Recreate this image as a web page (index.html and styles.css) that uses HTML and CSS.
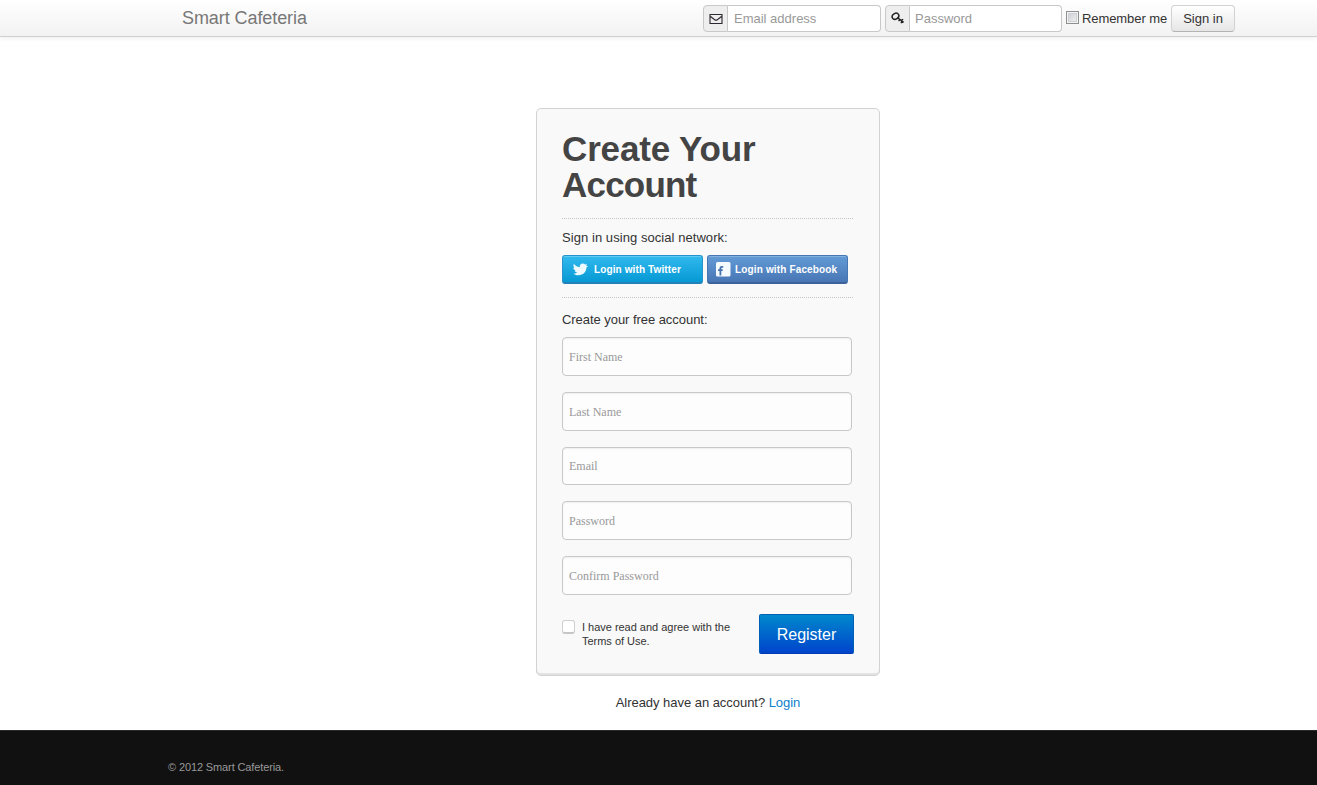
FILE: index.html
```html
<!DOCTYPE html>
<html lang="en">
<head>
<meta charset="utf-8">
<title>Smart Cafeteria</title>
<link rel="stylesheet" href="styles.css">
</head>
<body>
<header class="navbar">
  <a class="brand">Smart Cafeteria</a>
  <form class="signin">
    <div class="group">
      <span class="addon"><svg width="14" height="12" viewBox="0 0 14 12"><path d="M1 1.500h12v9H1zM1.500 3.500l4.200 3.300q1.300 1 2.600 0L12.500 3.500" fill="none" stroke="#2b2630" stroke-width="1.100"/></svg></span>
      <input class="nav-input nav-email" type="text" placeholder="Email address">
    </div>
    <div class="group">
      <span class="addon"><svg width="14" height="13" viewBox="0 0 14 13"><ellipse cx="4.500" cy="4.200" rx="3.500" ry="2.800" transform="rotate(-32 4.500 4.200)" fill="none" stroke="#222" stroke-width="1.500"/><path d="M6.400 5.600l6.200 4.800M9 7.500L7.600 9.100M11 9l-.9 2.200M10.300 8.200l1.900-.8" fill="none" stroke="#222" stroke-width="1.400"/></svg></span>
      <input class="nav-input nav-pass" type="text" placeholder="Password">
    </div>
    <span class="native-check"></span>
    <label class="remember">Remember me</label>
    <button class="btn-signin" type="button">Sign in</button>
  </form>
</header>
<main class="page">
  <section class="card">
    <h1 class="title"><span class="title-first">Create Your</span><span class="title-second">Account</span></h1>
    <div class="social">
      <p class="lead lead-social">Sign in using social network:</p>
      <div class="social-buttons">
        <a class="social-btn twitter"><svg width="16" height="13" viewBox="0 0 16 13"><path d="M.8.8C2.500 3 4.500 4 6.800 4.200C6.500 1.800 8 .5 9.900.6c1 0 1.700.4 2.300 1L14.100 1.200c-.1.700-.5 1.100-1 1.500L15 3.200 13.400 4.500c.1 4.300-3.400 7.700-7.800 7.700C3.300 12.200 1.500 11.600.3 10.700c1.700.1 3-.3 4-1.100C2.900 9.400 2.100 8.700 1.700 7.800h1.200C1.500 7 .4 6 .2 4.700l1.300.2C.5 3.800.3 2.200.8.8z" fill="#effaff"/></svg><span class="tw-label">Login with Twitter</span></a>
        <a class="social-btn facebook"><svg width="15" height="15" viewBox="0 0 15 15"><rect width="14.500" height="14.500" rx="1.500" fill="#f5faff"/><path d="M7.200 4.800H5.900c-1 0-1.500.6-1.500 1.500V13.500M2.100 8.200h4.600" fill="none" stroke="#4571ad" stroke-width="1.800"/></svg><span class="fb-label">Login with Facebook</span></a>
      </div>
    </div>
    <p class="lead lead-create">Create your free account:</p>
    <form class="fields">
      <input class="field" type="text" placeholder="First Name">
      <input class="field" type="text" placeholder="Last Name">
      <input class="field" type="text" placeholder="Email">
      <input class="field" type="text" placeholder="Password">
      <input class="field" type="text" placeholder="Confirm Password">
    </form>
    <div class="actions">
      <span class="check"></span>
      <p class="terms">I have read and agree with the<br>Terms of Use.</p>
      <button class="btn-register" type="button">Register</button>
    </div>
  </section>
  <p class="already">Already have an account? <a class="link">Login</a></p>
</main>
<footer class="footer"><p class="copyright">© 2012 Smart Cafeteria.</p></footer>
</body>
</html>
```
FILE: styles.css
```css
* { box-sizing: border-box; }
body {
  margin: 0;
  height: 785px;
  display: flex;
  flex-direction: column;
  overflow: hidden;
  background: #fff;
  color: #333;
  font: 13px/18px "Liberation Sans", Arial, sans-serif;
}
h1, p { margin: 0; }
input, button { font-family: inherit; margin: 0; }
svg { display: block; flex: none; }
input::placeholder { color: #999; opacity: 1; }

.navbar {
  display: flex;
  justify-content: space-between;
  height: 37px;
  flex: none;
  padding: 0 82px 0 182px;
  background: linear-gradient(#fff, #f2f2f2);
  border-bottom: 1px solid #d0d0d0;
  box-shadow: 0 1px 5px rgba(0, 0, 0, .08);
}
.brand { font-size: 18px; line-height: 36px; color: #777; letter-spacing: -.08px; }
.signin { display: flex; padding-top: 5px; }
.group { display: flex; height: 27px; margin-right: 4px; }
.addon {
  width: 25px;
  display: flex;
  align-items: center;
  justify-content: center;
  background: #eee;
  border: 1px solid #c8c8c8;
  border-radius: 4px 0 0 4px;
}
.nav-input {
  width: 153px;
  height: 27px;
  padding: 0 5px;
  border: 1px solid #c8c8c8;
  border-left: 0;
  border-radius: 0 4px 4px 0;
  background: #fff;
  font-size: 13px;
}
.nav-email { padding-left: 6px; }
.nav-pass { width: 152px; }
.native-check {
  width: 13px;
  height: 13px;
  margin: 6px 3px 0 0;
  border: 1px solid #8e8f8f;
  background: linear-gradient(135deg, #c5c9ce, #f6f6f6);
  box-shadow: inset 0 0 0 1px #f4f4f4, inset 0 0 0 2px #cdd0d4;
}
.remember { width: 89px; line-height: 27px; letter-spacing: -.08px; white-space: nowrap; }
.btn-signin {
  width: 64px;
  height: 27px;
  padding: 0;
  border: 1px solid #d2d2d2;
  border-bottom-color: #b3b3b3;
  border-radius: 4px;
  background: linear-gradient(#fff, #e6e6e6);
  color: #333;
  font-size: 13px;
}

.page { flex: 1; padding: 71px 0 0 536px; }
.card {
  width: 344px;
  height: 568px;
  padding: 22px 25px 0;
  background: #f9f9f9;
  border: 1px solid #d2d2d2;
  border-radius: 5px;
  box-shadow: inset 0 -2px 0 #e3e3e3;
}
.title { height: 87px; font-size: 35px; line-height: 36px; color: #444; }
.title span { display: block; }
.title-first { letter-spacing: -.15px; }
.title-second { letter-spacing: -.8px; }
.social {
  width: 291px;
  height: 80px;
  border: dotted #c4c4c4;
  border-width: 1px 0;
}
.lead-social { padding-top: 10px; letter-spacing: .06px; }
.social-buttons { display: flex; gap: 4px; margin-top: 8px; }
.social-btn {
  display: flex;
  align-items: center;
  width: 141px;
  height: 29px;
  border-radius: 3px;
  color: #fff;
  font-size: 10px;
  font-weight: bold;
  white-space: nowrap;
}
.social-btn span { padding-top: 2px; }
.twitter {
  padding-left: 10px;
  gap: 5px;
  background: linear-gradient(#31b9ee, #0699d4);
  border: 1px solid #2693cb;
  border-bottom: 2px solid #2480b8;
  box-shadow: inset 0 1px 0 #62cbf3;
  letter-spacing: .12px;
}
.facebook {
  padding-left: 8px;
  gap: 4px;
  background: linear-gradient(#629bd6, #4976b5);
  border: 1px solid #4676b5;
  border-bottom: 2px solid #3d619b;
  box-shadow: inset 0 1px 0 #83b1df;
  letter-spacing: .15px;
}
.lead-create { padding-top: 13px; letter-spacing: -.05px; }
.fields { display: flex; flex-direction: column; gap: 16px; margin-top: 8px; }
.field {
  width: 290px;
  height: 38.75px;
  padding: 2px 6px 0;
  border: 1px solid #c8c8c8;
  border-radius: 4px;
  background: #fdfdfd;
  box-shadow: inset 0 1px 2px rgba(0, 0, 0, .06);
  font: 12px "Liberation Serif", "Times New Roman", serif;
}
.actions { display: flex; width: 292px; margin-top: 19.25px; }
.check {
  width: 13px;
  height: 14px;
  margin-top: 6px;
  border: 1px solid #d0d0d0;
  border-bottom: 2px solid #c6c6c6;
  border-radius: 3px;
  background: #fff;
}
.terms { flex: 1; padding: 6px 0 0 7px; font-size: 11px; line-height: 14px; letter-spacing: -.02px; white-space: nowrap; }
.btn-register {
  width: 95px;
  height: 40px;
  padding: 2px 0 0;
  border: 1px solid #0060b5;
  border-bottom-color: #003ab3;
  border-radius: 2px;
  background: linear-gradient(#0088cc, #0044cc);
  color: #fff;
  font-size: 16px;
}
.already { width: 344px; padding-top: 18px; text-align: center; letter-spacing: -.04px; }
.link { color: #0d7fcb; }
.footer { flex: none; height: 55px; padding: 27px 168px 0; background: #111; border-top: 1px solid #292929; }
.copyright { font-size: 11px; color: #999; letter-spacing: -.12px; }
```
